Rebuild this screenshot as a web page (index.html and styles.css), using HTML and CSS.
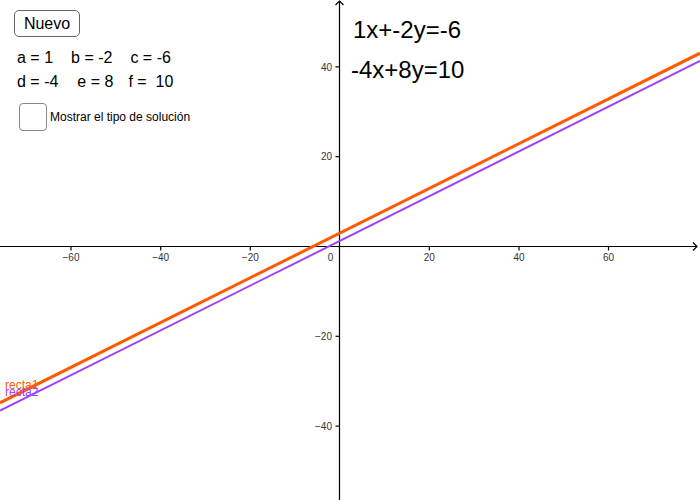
FILE: index.html
```html
<!DOCTYPE html>
<html lang="es">
<head>
<meta charset="utf-8">
<link rel="stylesheet" href="styles.css">
</head>
<body>
<div class="app">
  <svg class="canvas" width="700" height="500" viewBox="0 0 700 500">
    <g class="axes">
      <line x1="0" y1="246.5" x2="697" y2="246.5"/>
      <line x1="339.5" y1="1" x2="339.5" y2="500"/>
      <polyline points="693,242.5 697,246.5 693,250.5"/>
      <polyline points="335.5,5 339.5,1 343.5,5"/>
      <line x1="71" y1="246.5" x2="71" y2="250.5"/>
      <line x1="160.7" y1="246.5" x2="160.7" y2="250.5"/>
      <line x1="250.3" y1="246.5" x2="250.3" y2="250.5"/>
      <line x1="429.3" y1="246.5" x2="429.3" y2="250.5"/>
      <line x1="519" y1="246.5" x2="519" y2="250.5"/>
      <line x1="608.5" y1="246.5" x2="608.5" y2="250.5"/>
      <line x1="335.5" y1="66.9" x2="339.5" y2="66.9"/>
      <line x1="335.5" y1="156.7" x2="339.5" y2="156.7"/>
      <line x1="335.5" y1="336.3" x2="339.5" y2="336.3"/>
      <line x1="335.5" y1="426.1" x2="339.5" y2="426.1"/>
    </g>
    <g class="ticks-x">
      <text x="71" y="261">−60</text>
      <text x="160.7" y="261">−40</text>
      <text x="250.3" y="261">−20</text>
      <text x="330.5" y="261">0</text>
      <text x="429.3" y="261">20</text>
      <text x="519" y="261">40</text>
      <text x="608.5" y="261">60</text>
    </g>
    <g class="ticks-y">
      <text x="332" y="70.5">40</text>
      <text x="332" y="160.3">20</text>
      <text x="332" y="339.9">−20</text>
      <text x="332" y="429.7">−40</text>
    </g>
    <line class="recta2" x1="0" y1="410.6" x2="700" y2="61"/>
    <line class="recta1" x1="0" y1="402.8" x2="700" y2="53.2"/>
    <text class="lbl1" x="5" y="389">recta1</text>
    <text class="lbl2" x="5" y="396">recta2</text>
  </svg>

  <div class="panel">
    <button class="btn">Nuevo</button>
    <div class="params">
      <div class="row row1"><span>a = 1</span><span>b = -2</span><span>c = -6</span></div>
      <div class="row row2"><span>d = -4</span><span>e = 8</span><span>f =&nbsp; 10</span></div>
    </div>
    <label class="check"><span class="box"></span><span class="check-text">Mostrar el tipo de solución</span></label>
  </div>

  <div class="equations">
    <div class="eq eq1">1x+-2y=-6</div>
    <div class="eq">-4x+8y=10</div>
  </div>
</div>
</body>
</html>
```

FILE: styles.css
```css
html, body {
  margin: 0;
  padding: 0;
  background: #ffffff;
}

.app {
  position: relative;
  width: 700px;
  height: 500px;
  overflow: hidden;
  font-family: "Liberation Sans", Arial, sans-serif;
  color: #000;
}

.canvas {
  position: absolute;
  left: 0;
  top: 0;
  display: block;
}

.axes line,
.axes polyline {
  stroke: #000;
  stroke-width: 1.2;
  fill: none;
}

.ticks-x text,
.ticks-y text {
  font-family: "Liberation Sans", Arial, sans-serif;
  font-size: 10px;
  fill: #333;
}

.ticks-x text {
  text-anchor: middle;
}

.ticks-y text {
  text-anchor: end;
}

.recta1 {
  stroke: #ff5a00;
  stroke-width: 3;
}

.recta2 {
  stroke: #a040ff;
  stroke-width: 2;
}

.lbl1,
.lbl2 {
  font-family: "Liberation Sans", Arial, sans-serif;
  font-size: 12px;
}

.lbl1 {
  fill: #ff5a00;
}

.lbl2 {
  fill: #a040ff;
}

.panel {
  position: absolute;
  left: 14px;
  top: 10px;
  display: flex;
  flex-direction: column;
  align-items: flex-start;
}

.btn {
  box-sizing: border-box;
  width: 66px;
  height: 27px;
  margin: 0;
  padding: 0;
  border: 1px solid #666;
  border-radius: 5px;
  background: #fff;
  font-family: "Liberation Sans", Arial, sans-serif;
  font-size: 16px;
  color: #000;
  line-height: 25px;
}

.params {
  margin-top: 11px;
  padding-left: 3px;
  display: flex;
  flex-direction: column;
  gap: 4px;
  font-size: 16px;
  line-height: 20px;
}

.row {
  display: flex;
  white-space: pre;
}

.row1 {
  gap: 18px;
}

.row2 span:nth-child(1) {
  margin-right: 19px;
}

.row2 span:nth-child(2) {
  margin-right: 15px;
}

.check {
  display: flex;
  align-items: center;
  gap: 3px;
  margin-top: 11px;
  margin-left: 5px;
}

.box {
  box-sizing: border-box;
  width: 28px;
  height: 28px;
  border: 1px solid #888;
  border-radius: 4px;
  background: #fff;
}

.check-text {
  font-size: 12px;
  line-height: 14px;
}

.equations {
  position: absolute;
  left: 351px;
  top: 16px;
  display: flex;
  flex-direction: column;
  gap: 12px;
  font-size: 24px;
  line-height: 28px;
}

.eq1 {
  padding-left: 2px;
}
```
